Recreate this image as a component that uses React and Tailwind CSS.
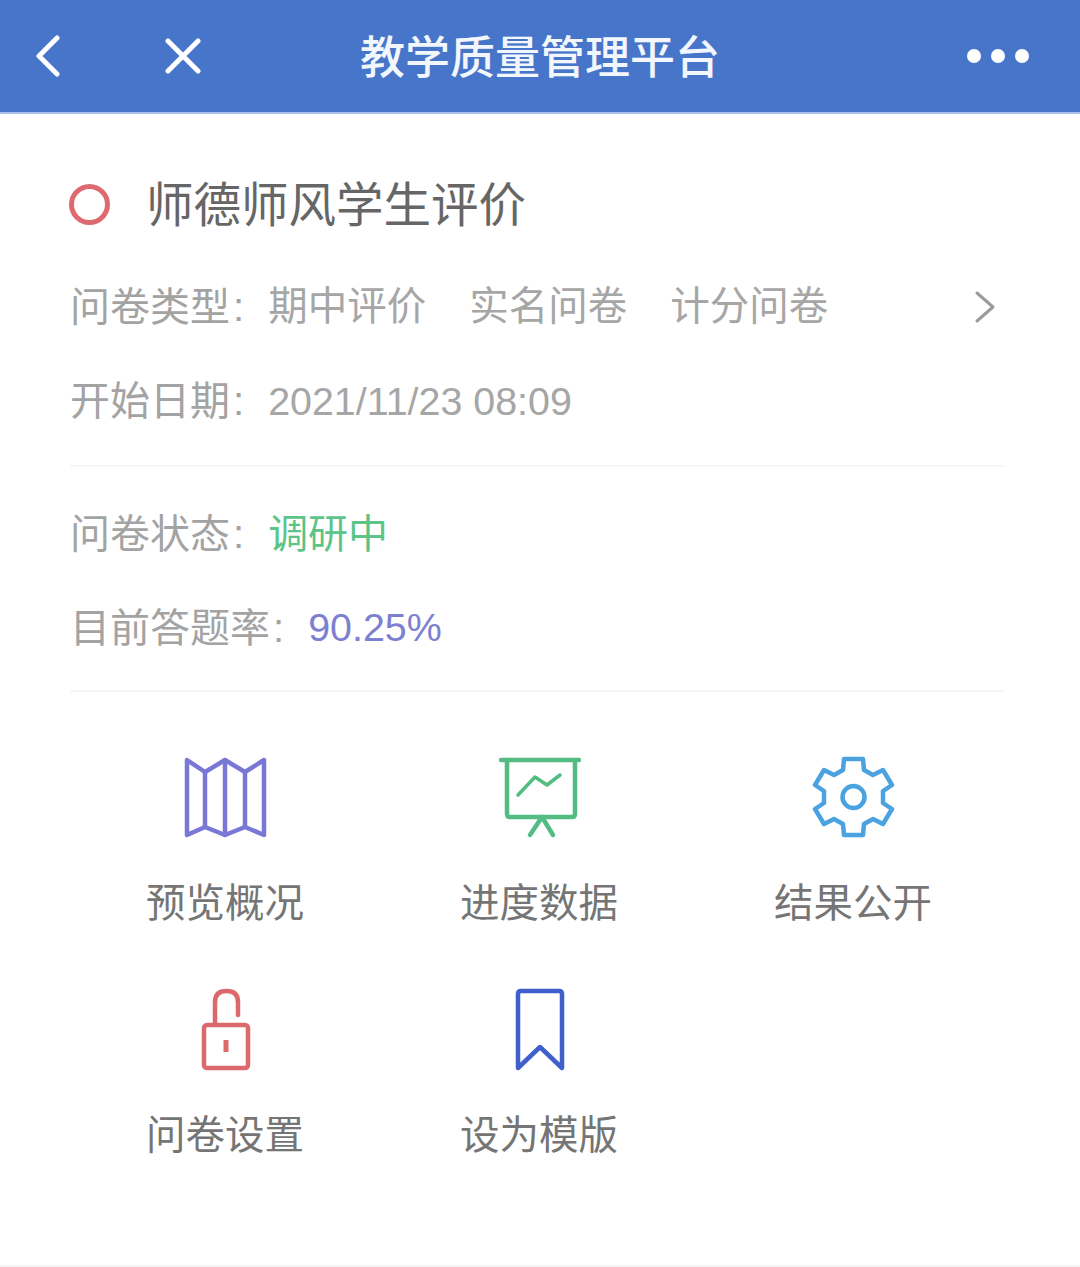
import React from "react";

const FONT = "font-['Liberation_Sans','Noto_Sans_CJK_SC',sans-serif]";

function MapIcon() {
  return (
    <svg width="84" height="84" viewBox="0 0 84 84" fill="none" stroke="#7a78d6" strokeWidth="4.500" strokeLinejoin="round" strokeLinecap="round">
      <path d="M4 5 L22 17 L42 5 L62 17 L81 5 V80 L62 72 L42 80 L22 72 L4 80 Z" />
      <path d="M22 17 V72 M42 5 V80 M62 17 V72" />
    </svg>
  );
}

function BoardIcon() {
  return (
    <svg width="84" height="84" viewBox="0 0 84 84" fill="none" stroke="#52bc82" strokeWidth="4.500" strokeLinecap="round" strokeLinejoin="round">
      <path d="M4 5 H82" />
      <path d="M10 5 V59 Q10 62 13 62 H75 Q78 62 78 59 V5" />
      <path d="M21 40 L38 22 L50 30 L63 20" strokeWidth="3.500" />
      <path d="M45 62 L33 80 M45 62 L56 80" />
    </svg>
  );
}

function GearIcon() {
  return (
    <svg width="84" height="84" viewBox="0 0 84 84" fill="none" stroke="#4aa3e0" strokeWidth="4.500" strokeLinejoin="round">
      <path d="M33 4 H52 L53 15 L62 20 L72 15 L81 30 L72 36 V48 L81 54 L72 69 L62 64 L53 69 L52 80 H33 L32 69 L23 64 L13 69 L4 54 L13 48 V36 L4 30 L13 15 L23 20 L32 15 Z" />
      <circle cx="42.500" cy="42" r="11" />
    </svg>
  );
}

function LockIcon() {
  return (
    <svg width="84" height="84" viewBox="0 0 84 84" fill="none" stroke="#dc6a6c" strokeWidth="4.500" strokeLinecap="round" strokeLinejoin="round">
      <rect x="21" y="38" width="44" height="43" rx="3" />
      <path d="M32 38 V15 Q32 4 43.500 4 Q55 4 55 15 V28" />
      <path d="M43 53 V65" strokeWidth="5" strokeLinecap="butt" />
    </svg>
  );
}

function BookmarkIcon() {
  return (
    <svg width="84" height="84" viewBox="0 0 84 84" fill="none" stroke="#3f5fcc" strokeWidth="4.500" strokeLinejoin="round">
      <path d="M24 4 Q21 4 21 7 V81 L43 60 L65 81 V7 Q65 4 62 4 Z" />
    </svg>
  );
}

const actions = [
  { label: "预览概况", icon: <MapIcon /> },
  { label: "进度数据", icon: <BoardIcon /> },
  { label: "结果公开", icon: <GearIcon /> },
  { label: "问卷设置", icon: <LockIcon /> },
  { label: "设为模版", icon: <BookmarkIcon /> },
];

function InfoRow({ label, children }) {
  return (
    <div className="flex h-[94px] items-center text-[40px] text-[#a3a3a3]">
      <span>{label}</span>
      <span className="ml-[3px] mr-[24px]">:</span>
      {children}
    </div>
  );
}

export default function App() {
  return (
    <div className={`${FONT} relative h-[1267px] w-[1080px] overflow-hidden bg-white`}>
      {/* Title bar */}
      <div className="flex h-[114px] items-center justify-between border-b-2 border-[#a9c0ea] bg-[#4675c9] pl-[35px] pr-[51px]">
        <div className="flex items-center gap-[104px]">
          <svg width="26" height="42" viewBox="0 0 26 42" fill="none" stroke="#ffffff" strokeWidth="5" strokeLinecap="round" strokeLinejoin="round">
            <path d="M22 3 L4 21 L22 39" />
          </svg>
          <svg width="36" height="36" viewBox="0 0 36 36" fill="none" stroke="#ffffff" strokeWidth="5" strokeLinecap="round">
            <path d="M3 3 L33 33 M33 3 L3 33" />
          </svg>
        </div>
        <div className="absolute left-0 right-0 top-[35px] text-center text-[45px] leading-[48px] font-medium text-[#f2f6fd]">
          教学质量管理平台
        </div>
        <div className="flex gap-[10px]">
          <div className="h-[14px] w-[14px] rounded-full bg-white" />
          <div className="h-[14px] w-[14px] rounded-full bg-white" />
          <div className="h-[14px] w-[14px] rounded-full bg-white" />
        </div>
      </div>

      <div className="pl-[70px] pr-[75px]">
        {/* Survey name */}
        <div className="mt-[60px] flex h-[60px] items-center">
          <div className="-ml-px h-[41px] w-[41px] rounded-full border-[5px] border-[#dc6a70]" />
          <div className="ml-[36px] pt-[4px] text-[47.500px] text-[#666666]">师德师风学生评价</div>
        </div>

        <div className="mt-[26px] border-b-2 border-[#f6f6f6] pb-[17px]">
          <InfoRow label="问卷类型">
            <div className="flex flex-1 items-center text-[39.500px] text-[#a6a6a6]">
              <span>期中评价</span>
              <span className="ml-[43px]">实名问卷</span>
              <span className="ml-[43px]">计分问卷</span>
              <svg className="ml-auto mr-[8px]" width="24" height="36" viewBox="0 0 24 36" fill="none" stroke="#9a9a9a" strokeWidth="3" strokeLinecap="round" strokeLinejoin="round">
                <path d="M4 4 L20 18 L4 32" />
              </svg>
            </div>
          </InfoRow>
          <InfoRow label="开始日期">
            <span className="pt-[2px] text-[39.400px] text-[#a6a6a6]">2021/11/23 08:09</span>
          </InfoRow>
        </div>

        <div className="mt-[20px] border-b-2 border-[#f6f6f6] pb-[15px]">
          <InfoRow label="问卷状态">
            <span className="text-[#5cc489]">调研中</span>
          </InfoRow>
          <InfoRow label="目前答题率">
            <span className="text-[39.400px] text-[#7d7fd0]">90.25%</span>
          </InfoRow>
        </div>
      </div>

      {/* Action grid */}
      <div className="mt-[63px] grid grid-cols-[314px_314px_314px] gap-y-[60px] pl-[68px]">
        {actions.map((a) => (
          <div key={a.label} className="flex flex-col items-center">
            {a.icon}
            <div className="mt-[40px] text-[39.500px] leading-[48px] text-[#757575]">{a.label}</div>
          </div>
        ))}
      </div>

      <div className="absolute bottom-0 left-0 right-0 h-[2px] bg-[#f6f6f6]" />
    </div>
  );
}
